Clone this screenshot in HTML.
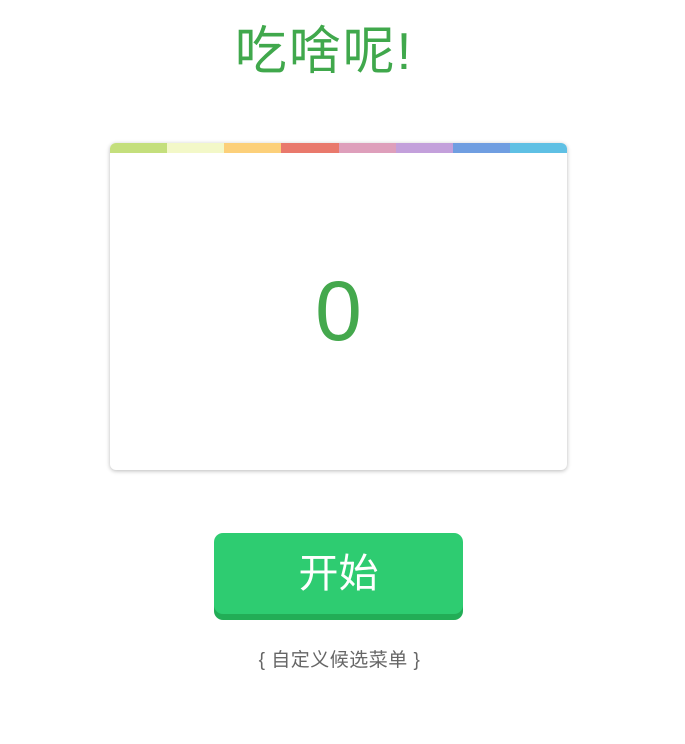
<!DOCTYPE html>
<html><head><meta charset="utf-8"><style>
body{margin:0;background:#fff;width:685px;height:744px;position:relative;font-family:"Liberation Sans","Noto Sans CJK SC",sans-serif;overflow:hidden}
.t{position:absolute;left:200px;top:20px;width:250px;text-align:center;font-size:52px;color:#40a84c;line-height:64px;white-space:nowrap;letter-spacing:2px;transform:translateX(-1px)}
.card{position:absolute;left:110px;top:143px;width:457px;height:327px;background:#fff;border-radius:6px;box-shadow:0 1px 4px rgba(0,0,0,.28);overflow:hidden}
.s{display:flex;height:10px}.s div{flex:1}
.n{position:absolute;left:0;right:0;top:263px;text-align:center;font-size:84px;color:#44a84d;line-height:96px;transform:translateX(-4px)}
.b{position:absolute;left:214px;top:533px;width:249px;height:81px;background:#2ecc71;border-radius:9px;box-shadow:0 6px 0 #22ad56;color:#fff;font-size:40px;text-align:center;line-height:82px}
.l{position:absolute;left:0;right:0;top:649px;text-align:center;font-size:19px;color:#666;line-height:24px;transform:translateX(-3px);letter-spacing:0.5px}
</style></head><body>
<div class="t">吃啥呢!</div>
<div class="card"><div class="s">
<div style="background:#c4df7c"></div><div style="background:#f3f8c8"></div><div style="background:#fcd07a"></div><div style="background:#e9796c"></div><div style="background:#de9fbb"></div><div style="background:#c3a0db"></div><div style="background:#709ee1"></div><div style="background:#5fc0e4"></div>
</div></div>
<div class="n">0</div>
<div class="b">开始</div>
<div class="l">{ 自定义候选菜单 }</div>
</body></html>
